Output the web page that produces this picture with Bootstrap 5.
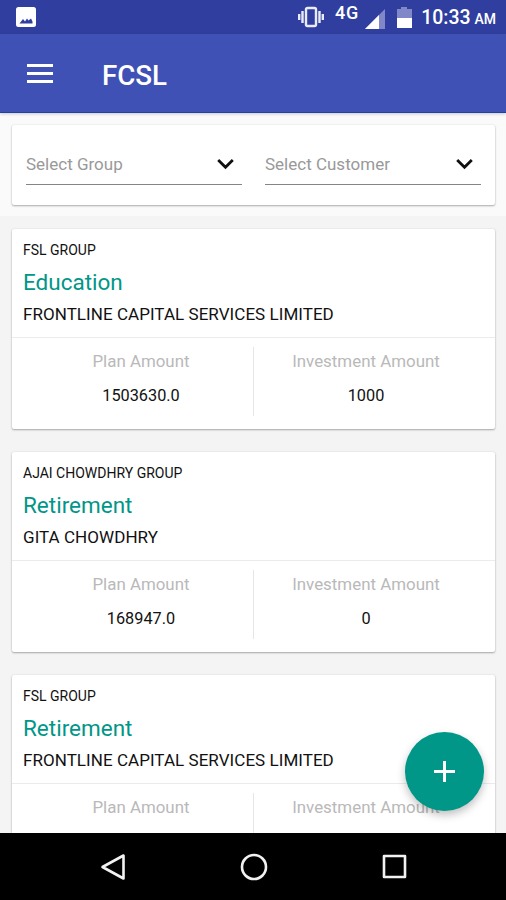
<!DOCTYPE html>
<html lang="en">
<head>
<meta charset="utf-8">
<meta name="viewport" content="width=device-width, initial-scale=1">
<title>FCSL</title>
<link href="https://cdn.jsdelivr.net/npm/bootstrap@5.3.0/dist/css/bootstrap.min.css" rel="stylesheet">
<style>
body{font-family:Roboto,"Liberation Sans",sans-serif;background:#f4f4f4;color:#111;height:900px}
svg{display:block;flex:none}
.status{height:34px;background:#303f9f;padding:0 10px 0 16px}
.net{font-size:18px;line-height:20px;font-weight:500;margin:-9px 6px 0 11px;letter-spacing:.8px}
.clock{font-size:19.5px;font-weight:500;line-height:34px;margin-left:9px;padding-top:3px;white-space:nowrap}
.clock small{font-size:14px;margin-left:-1px}
.appbar{height:79px;background:#3f51b5;border-bottom:1.5px solid #2440a8;padding:0 27px;z-index:2;box-shadow:0 1px 3px rgba(0,0,0,.2)}
.brand{font-size:27.7px;font-weight:500;margin-left:49px;line-height:32px;padding-top:5px}
.filters{background:#fafafa;height:103px;padding:12px 11px 0 12px}
.tile{border:0;border-radius:2px;box-shadow:0 1px 2px rgba(0,0,0,.3),0 0 2px rgba(0,0,0,.1)}
.filters .tile{height:80px;padding:20px 14px 0;column-gap:23px}
.picker{height:40px;border-bottom:1.5px solid #858585;color:#999;font-size:17px;padding-right:8px}
.plans{padding:13px 11px 0 12px;gap:23px}
.plan{height:200px;flex:none}
.plan-head{height:109px;padding:11px 11px 0;border-bottom:1px solid #ebebeb}
.group{font-size:14px;line-height:20px}
.goal{font-size:22.5px;line-height:28px;color:#009688;margin-top:8px}
.holder{font-size:17px;line-height:24px;letter-spacing:.05px;margin-top:6px;white-space:nowrap}
.plan-body{padding:9px 17px 0}
.plan-body .cell{height:69px;font-size:16.3px;line-height:24px;padding-top:2px}
.plan-body .cell:first-child{flex:0 0 224px}
.plan-body .cell+.cell{border-left:1px solid #e6e6e6;flex:1 1 0}
.cap{color:#b9b9b9;font-size:16.9px;margin-bottom:11px}
.fab{right:22px;bottom:22px;width:79px;height:79px;background:#009688;box-shadow:0 4px 8px rgba(0,0,0,.25)}
.softkeys{height:67px;background:#000;padding:0 99px 0 100px}
</style>
<script src="https://cdn.jsdelivr.net/npm/bootstrap@5.3.0/dist/js/bootstrap.bundle.min.js"></script>
</head>
<body class="d-flex flex-column overflow-hidden">
<div class="status d-flex align-items-center text-white flex-shrink-0">
  <svg class="me-auto" width="20" height="20" viewBox="0 0 20 20"><path fill="#fff" fill-rule="evenodd" d="M2.500 0h15A2.500 2.500 0 0 1 20 2.500v15a2.500 2.500 0 0 1-2.500 2.500h-15A2.500 2.500 0 0 1 0 17.500v-15A2.500 2.500 0 0 1 2.500 0zM3.500 16.500h13v-2l-1.500-3-2.500 2-1.500-2-2 3-2-2.500z"/></svg>
  <svg width="26" height="22" viewBox="0 0 26 22" fill="none" stroke="#e9ebfa" stroke-width="2.400"><rect x="8" y="2" width="10" height="18" rx="1.500"/><path d="M4.500 5v12M21.500 5v12M1.200 8v6M24.800 8v6"/></svg>
  <div class="net">4G</div>
  <svg class="mt-1" width="20" height="20" viewBox="0 0 20 20"><path fill="#8088c8" d="M20 0v20H0z"/><path fill="#fff" d="M14 6v14H0z"/></svg>
  <svg class="ms-2 ps-1" width="19" height="21" viewBox="0 0 15 21"><path fill="#8088c8" d="M0 2h4V0h6v2h5v10H0z"/><path fill="#fff" d="M0 11h15v10H0z"/></svg>
  <div class="clock">10:33 <small>AM</small></div>
</div>
<nav class="appbar d-flex align-items-center text-white flex-shrink-0 position-relative">
  <svg class="mt-1" width="26" height="20" viewBox="0 0 26 20" fill="#fff" overflow="visible"><path d="M0-1h26v3H0zM0 7h26v3H0zM0 15h26v3H0z"/></svg>
  <div class="brand">FCSL</div>
</nav>
<main class="flex-grow-1 overflow-hidden position-relative d-flex flex-column">
  <div class="filters flex-shrink-0">
    <div class="tile card flex-row">
      <div class="picker d-flex align-items-center justify-content-between w-50"><span>Select Group</span><svg width="17" height="11" viewBox="0 0 17 11" fill="none" stroke="#111" stroke-width="2.800"><path d="M1.200 1l7.300 7.300 7.300-7.300"/></svg></div>
      <div class="picker d-flex align-items-center justify-content-between w-50"><span>Select Customer</span><svg width="17" height="11" viewBox="0 0 17 11" fill="none" stroke="#111" stroke-width="2.800"><path d="M1.200 1l7.300 7.300 7.300-7.300"/></svg></div>
    </div>
  </div>
  <div class="plans d-flex flex-column">
    <div class="tile card plan">
      <div class="plan-head"><div class="group">FSL GROUP</div><div class="goal">Education</div><div class="holder">FRONTLINE CAPITAL SERVICES LIMITED</div></div>
      <div class="plan-body d-flex text-center"><div class="cell"><div class="cap">Plan Amount</div><div>1503630.0</div></div><div class="cell"><div class="cap">Investment Amount</div><div>1000</div></div></div>
    </div>
    <div class="tile card plan">
      <div class="plan-head"><div class="group">AJAI CHOWDHRY GROUP</div><div class="goal">Retirement</div><div class="holder">GITA CHOWDHRY</div></div>
      <div class="plan-body d-flex text-center"><div class="cell"><div class="cap">Plan Amount</div><div>168947.0</div></div><div class="cell"><div class="cap">Investment Amount</div><div>0</div></div></div>
    </div>
    <div class="tile card plan">
      <div class="plan-head"><div class="group">FSL GROUP</div><div class="goal">Retirement</div><div class="holder">FRONTLINE CAPITAL SERVICES LIMITED</div></div>
      <div class="plan-body d-flex text-center"><div class="cell"><div class="cap">Plan Amount</div></div><div class="cell"><div class="cap">Investment Amount</div></div></div>
    </div>
  </div>
  <button type="button" aria-label="Add plan" class="fab btn rounded-circle border-0 position-absolute d-flex align-items-center justify-content-center p-0"><svg width="21" height="21" viewBox="0 0 21 21"><path stroke="#fff" stroke-width="3" d="M10.500 0v21M0 10.500h21"/></svg></button>
</main>
<div class="softkeys d-flex align-items-center justify-content-between flex-shrink-0">
  <svg width="26" height="28" viewBox="0 0 26 28" fill="none" stroke="#f2f2f2" stroke-width="2.600" stroke-linejoin="round"><path d="M23.500 2.500v23L2.500 14z"/></svg>
  <svg width="28" height="28" viewBox="0 0 28 28" fill="none" stroke="#f2f2f2" stroke-width="2.600"><circle cx="14" cy="14" r="12"/></svg>
  <svg width="25" height="25" viewBox="0 0 25 25" fill="none" stroke="#f2f2f2" stroke-width="2.600" stroke-linejoin="round"><rect x="2" y="2" width="21" height="21"/></svg>
</div>
</body>
</html>
